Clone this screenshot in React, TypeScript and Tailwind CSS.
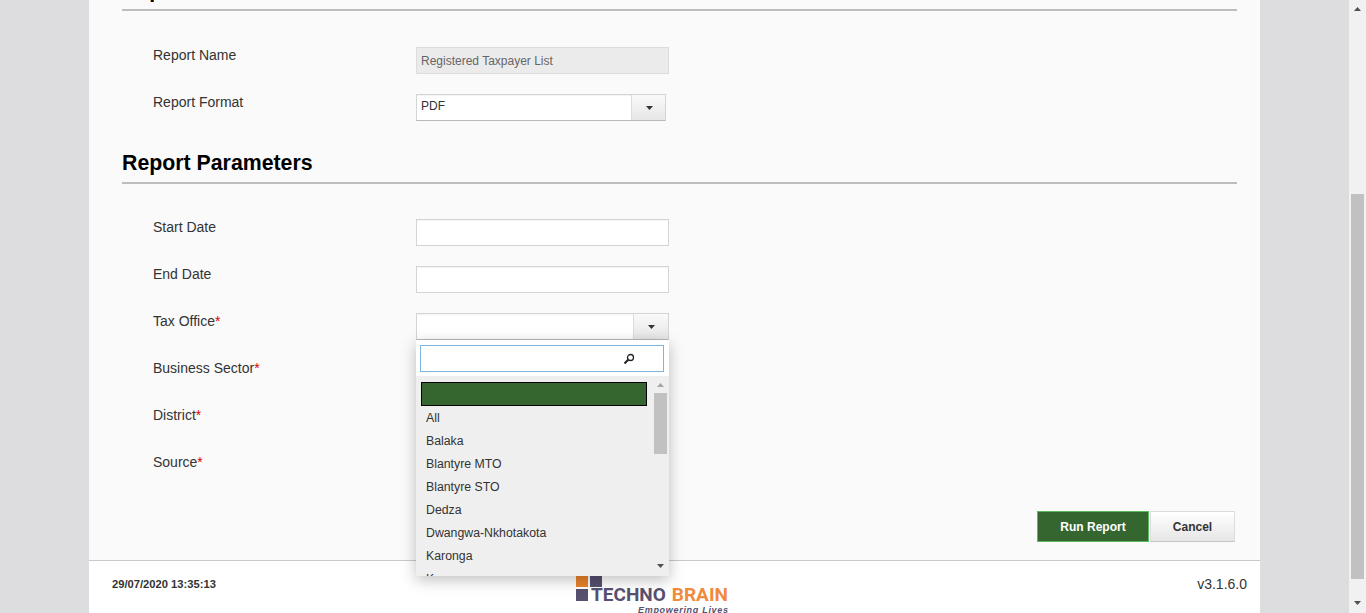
import React from 'react';

const inputClass = 'h-[27px] w-[253px] border border-[#d4d4d4] bg-white shadow-[inset_0_1px_1px_rgba(0,0,0,0.05)]';

function Caret({ up = false, className = '' }: { up?: boolean; className?: string }) {
  return (
    <svg width="7" height="4" viewBox="0 0 7 4" className={className}>
      <polygon points={up ? '3.5,0 7,4 0,4' : '0,0 7,0 3.5,4'} fill="currentColor" />
    </svg>
  );
}

function Field({ label, required, children }: { label: string; required?: boolean; children?: React.ReactNode }) {
  return (
    <div className="flex h-[27px] mb-[20px] pl-[31px]">
      <div className="w-[263px] text-[14px] leading-[16px] text-[#333]">
        {label}
        {required && <span className="text-[#d00]">*</span>}
      </div>
      {children ?? <div className={inputClass} />}
    </div>
  );
}

function SelectBox({ value, width, buttonWidth }: { value?: string; width: string; buttonWidth: string }) {
  return (
    <div className={`flex h-[27px] border border-[#d4d4d4] border-b-[#b9b9b9] bg-white shadow-[inset_0_1px_1px_rgba(0,0,0,0.05)] ${width}`}>
      <div className="flex-1 pl-[4px] text-[12px] leading-[22px] text-[#333]">{value}</div>
      <div className={`flex items-center justify-center border-l border-[#dcdcdc] bg-gradient-to-b from-[#fafafa] to-[#e6e6e6] pl-[1px] text-[#333] ${buttonWidth}`}>
        <Caret />
      </div>
    </div>
  );
}

function SectionTitle({ children }: { children?: React.ReactNode }) {
  return (
    <h2 className="text-[21.3px] leading-[24px] font-bold text-black pb-[7px] border-b-2 border-[#bdbdbd]">
      {children}
    </h2>
  );
}

const offices = ['All', 'Balaka', 'Blantyre MTO', 'Blantyre STO', 'Dedza', 'Dwangwa-Nkhotakota', 'Karonga', 'Kasungu'];

function OfficeDropdown() {
  return (
    <div className="absolute left-0 top-[27px] z-10 w-[253px] h-[236px] overflow-hidden bg-[#efefef] shadow-[0_4px_14px_rgba(0,0,0,0.25)]">
      <div className="h-[36px] bg-white pl-[4px] pt-[5px]">
        <div className="flex h-[27px] w-[244px] items-center justify-end border border-[#7db4e0] bg-white pr-[28px]">
          <svg width="12" height="12" viewBox="0 0 12 12" fill="none" stroke="#222">
            <circle cx="7.5" cy="4.5" r="3" strokeWidth="1.3" />
            <path d="M5.2 6.8 1.5 10.5" strokeWidth="2" />
          </svg>
        </div>
      </div>
      <div className="flex">
        <div className="w-[238px] pl-[5px] pt-[6px]">
          <div className="h-[24px] w-[226px] border border-black bg-[#35662f]" />
          <ul className="mt-[1px]">
            {offices.map(o => (
              <li key={o} className="h-[23px] pl-[5px] text-[12.3px] leading-[23px] text-[#333]">{o}</li>
            ))}
          </ul>
        </div>
        <div className="flex h-[200px] w-[13px] flex-col items-center text-[#a6a6a6]">
          <Caret up className="mt-[7px]" />
          <div className="mt-[6px] h-[61px] w-[13px] bg-[#c1c1c1]" />
          <Caret className="mt-auto mb-[8px] text-[#505050]" />
        </div>
      </div>
    </div>
  );
}

function Logo() {
  return (
    <div className="relative h-[52px] w-[153px] shrink-0">
      <div className="flex h-[40px] items-start">
        <div className="grid w-[26px] grid-cols-[12px_12px] grid-rows-[12px_12px] gap-x-[2px] gap-y-[2px]">
          <div className="bg-[#e8842c]" />
          <div className="bg-[#57506f]" />
          <div className="bg-[#57506f]" />
        </div>
        <div className="ml-[-11px] mt-[12px] flex h-[16px] items-center font-['Roboto',sans-serif] text-[19px] leading-[16px] font-bold whitespace-nowrap">
          <span className="text-[#57506f]">TECHNO</span>
          <span className="ml-[6px] text-[#f08a3c]">BRAIN</span>
        </div>
      </div>
      <div className="absolute left-[62px] top-[30px] whitespace-nowrap text-[9px] leading-[10px] font-bold italic tracking-[0.7px] text-[#57506f]">
        Empowering Lives
      </div>
    </div>
  );
}

export default function App() {
  return (
    <div className="flex h-[613px] w-full overflow-hidden bg-[#dddde0] font-['Liberation_Sans',Arial,sans-serif]">
      <div className="flex h-full flex-1 justify-center">
        <div className="flex h-full w-[1171px] flex-col bg-[#fafafa]">
          <div className="h-[560px] shrink-0 pl-[33px] pr-[23px]">
            <div className="-mt-[22px]">
              <SectionTitle>Report Details</SectionTitle>
            </div>
            <div className="mt-[36px]">
              <Field label="Report Name">
                <div className="h-[27px] w-[253px] border border-[#dcdcdc] bg-[#ebebeb] pl-[4px] text-[12px] leading-[26px] text-[#666]">
                  Registered Taxpayer List
                </div>
              </Field>
              <Field label="Report Format">
                <SelectBox value="PDF" width="w-[250px]" buttonWidth="w-[34px]" />
              </Field>
            </div>

            <div className="mt-[30px]">
              <SectionTitle>Report Parameters</SectionTitle>
            </div>
            <div className="mt-[35px]">
              <Field label="Start Date" />
              <Field label="End Date" />
              <Field label="Tax Office" required>
                <div className="relative">
                  <SelectBox width="w-[253px]" buttonWidth="w-[35px]" />
                  <OfficeDropdown />
                </div>
              </Field>
              <Field label="Business Sector" required />
              <Field label="District" required />
              <Field label="Source" required />
            </div>

            <div className="mt-[30px] flex justify-end gap-[1px] pr-[2px]">
              <button className="h-[31px] w-[112px] border border-[#5cb85c] bg-[#35662f] text-[12px] font-bold text-white">
                Run Report
              </button>
              <button className="h-[31px] w-[85px] border border-[#dcdcdc] border-b-[#c4c4c4] bg-gradient-to-b from-[#ffffff] to-[#e6e6e6] text-[12px] font-bold text-[#333]">
                Cancel
              </button>
            </div>
          </div>

          <footer className="flex flex-1 border-t border-[#c9c9c9] bg-white pl-[23px] pr-[13px]">
            <div className="w-[464px] shrink-0 pt-[17px] text-[11.2px] leading-[12px] font-bold text-[#333]">
              29/07/2020 13:35:13
            </div>
            <div className="pt-[14px]">
              <Logo />
            </div>
            <div className="ml-auto pt-[15px] text-[14px] leading-[16px] text-[#333]">v3.1.6.0</div>
          </footer>
        </div>
      </div>

      <div className="flex h-full w-[17px] shrink-0 flex-col items-center bg-[#f1f1f1] text-[#505050]">
        <Caret up className="mt-[7px]" />
        <div className="mt-[183px] h-[385px] w-[13px] bg-[#c1c1c1]" />
        <Caret className="mt-auto mb-[8px]" />
      </div>
    </div>
  );
}
